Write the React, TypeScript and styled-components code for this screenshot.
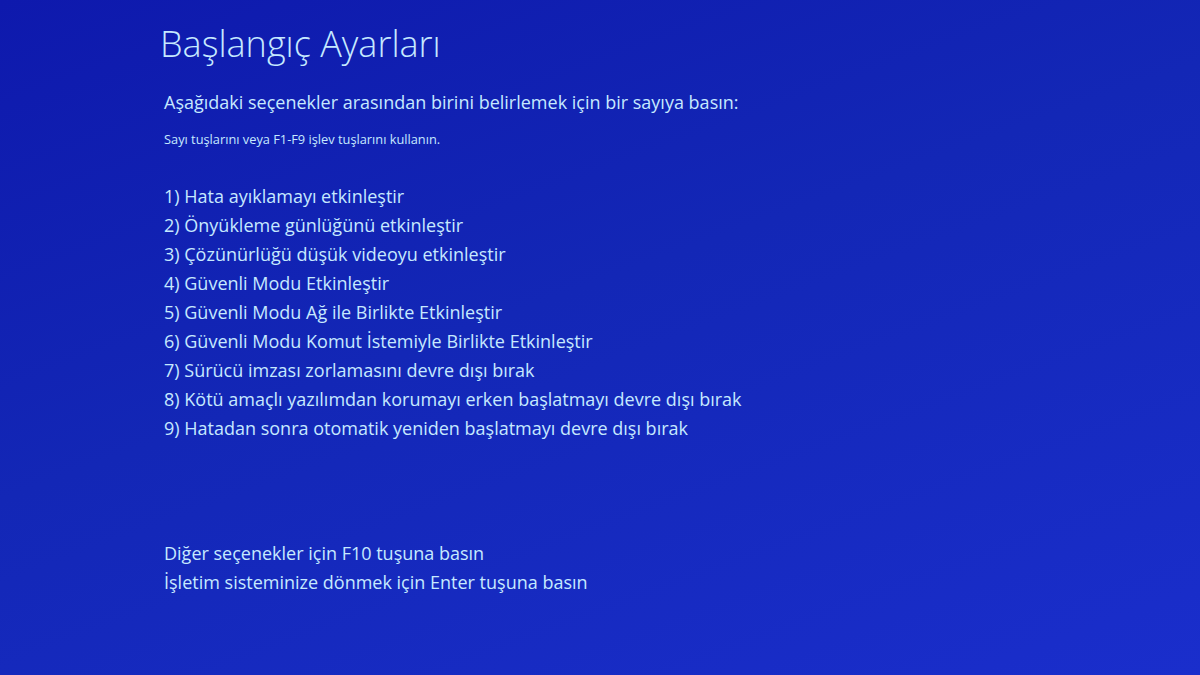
import React from 'react';
import styled, { createGlobalStyle } from 'styled-components';

const options = [
  'Hata ayıklamayı etkinleştir',
  'Önyükleme günlüğünü etkinleştir',
  'Çözünürlüğü düşük videoyu etkinleştir',
  'Güvenli Modu Etkinleştir',
  'Güvenli Modu Ağ ile Birlikte Etkinleştir',
  'Güvenli Modu Komut İstemiyle Birlikte Etkinleştir',
  'Sürücü imzası zorlamasını devre dışı bırak',
  'Kötü amaçlı yazılımdan korumayı erken başlatmayı devre dışı bırak',
  'Hatadan sonra otomatik yeniden başlatmayı devre dışı bırak',
];

const GlobalStyle = createGlobalStyle`
  html, body {
    margin: 0;
    padding: 0;
    background: #1425b8;
  }
  * {
    box-sizing: border-box;
  }
`;

const App: React.FC = () => {
  return (
    <>
      <GlobalStyle />
      <Screen>
        <Title>Başlangıç Ayarları</Title>
        <Prompt>Aşağıdaki seçenekler arasından birini belirlemek için bir sayıya basın:</Prompt>
        <Hint>Sayı tuşlarını veya F1-F9 işlev tuşlarını kullanın.</Hint>
        <OptionList>
          {options.map((text, i) => (
            <Option key={i}>
              {i + 1}) {text}
            </Option>
          ))}
        </OptionList>
        <Footer>
          <Option>Diğer seçenekler için F10 tuşuna basın</Option>
          <Option>İşletim sisteminize dönmek için Enter tuşuna basın</Option>
        </Footer>
      </Screen>
    </>
  );
};

const Screen = styled.div`
  width: 1200px;
  height: 675px;
  overflow: hidden;
  display: flex;
  flex-direction: column;
  padding: 18px 0 0 164px;
  background: linear-gradient(160deg, #0e19ad 0%, #1327b6 45%, #1a2ecc 100%);
  color: #c6e9ff;
  font-family: 'Open Sans', 'Noto Sans', sans-serif;
`;

const Title = styled.h1`
  margin: 0 0 0 -4px;
  font-size: 36px;
  font-weight: 300;
  line-height: 52px;
`;

const Prompt = styled.p`
  margin: 20px 0 0;
  font-size: 18px;
  line-height: 24px;
`;

const Hint = styled.p`
  margin: 17px 0 0;
  font-size: 12.8px;
  line-height: 16px;
`;

const OptionList = styled.div`
  display: flex;
  flex-direction: column;
  margin-top: 35px;
`;

const Option = styled.div`
  font-size: 18px;
  line-height: 29px;
`;

const Footer = styled.div`
  display: flex;
  flex-direction: column;
  margin-top: 96px;
`;

export default App;
